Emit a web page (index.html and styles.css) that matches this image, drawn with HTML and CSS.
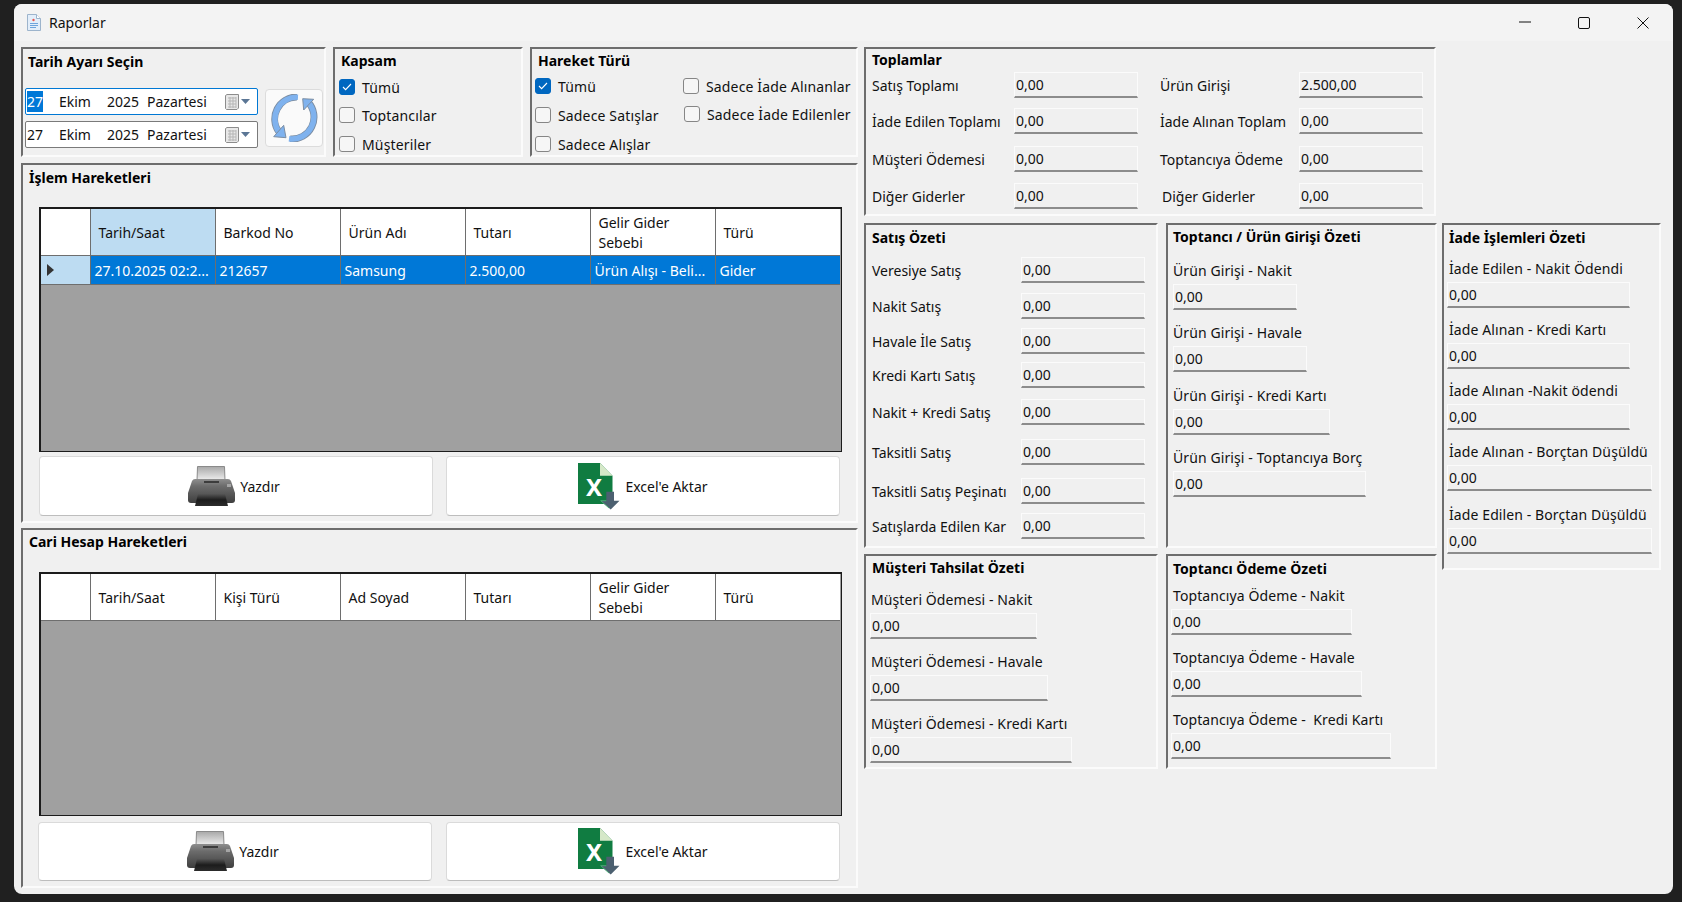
FILE: index.html
```html
<!DOCTYPE html>
<html lang="en">
<head>
    <meta charset="UTF-8">
    <meta name="viewport" content="width=device-width, initial-scale=1.0">
    <title>Raporlar</title>
    <link rel="stylesheet" href="styles.css">
</head>
<body>
<div class="window">
    <!-- Title bar -->
    <header class="titlebar">
        <svg class="doc-icon" width="14" height="17" viewBox="0 0 14 17">
            <path d="M0.5 0.5H9.5L13.5 4.5V16.5H0.5Z" fill="#e3eefa" stroke="#9db4cc"/>
            <path d="M9.5 0.5V4.5H13.5" fill="#fff" stroke="#9db4cc"/>
            <circle cx="6.5" cy="6" r="1.2" fill="#e8584f"/>
            <path d="M3 9.5H11M3 11.5H11M3 13.5H9" stroke="#6ea4dc"/>
        </svg>
        <span class="window-title">Raporlar</span>
        <div class="window-controls">
            <svg width="12" height="12" viewBox="0 0 12 12"><path d="M0 6H12" stroke="#111" stroke-width="1"/></svg>
            <svg width="12" height="12" viewBox="0 0 12 12"><rect x="0.5" y="0.5" width="11" height="11" rx="1.5" fill="none" stroke="#111"/></svg>
            <svg width="12" height="12" viewBox="0 0 12 12"><path d="M0.5 0.5L11.5 11.5M11.5 0.5L0.5 11.5" stroke="#111"/></svg>
        </div>
    </header>

    <main class="content">
        <!-- Left column -->
        <section class="left-col">
            <div class="filters">
                <div class="group tarih">
                    <h3 class="group-title low">Tarih Ayarı Seçin</h3>
                    <div class="tarih-body">
                        <div class="pickers">
                            <div class="picker focused">
                                <span class="p-day"><span class="selected">27</span></span><span class="p-month">Ekim</span><span class="p-year">2025</span><span>Pazartesi</span>
                                <svg class="cal" width="25" height="16" viewBox="0 0 25 16">
                                    <path d="M0.5 1.5L2 0.5H13.5V14L12 15.5H1.5L0.5 14.5Z" fill="#e8e8e8" stroke="#8c8c8c"/>
                                    <path d="M3 4H11M3 7H11M3 10H11M3 13H11M5 3V14M8 3V14M11 3V14" stroke="#b5b5b5"/>
                                    <path d="M16 5H25L20.5 10Z" fill="#5b7695"/>
                                </svg>
                            </div>
                            <div class="picker">
                                <span class="p-day">27</span><span class="p-month">Ekim</span><span class="p-year">2025</span><span>Pazartesi</span>
                                <svg class="cal" width="25" height="16" viewBox="0 0 25 16">
                                    <path d="M0.5 1.5L2 0.5H13.5V14L12 15.5H1.5L0.5 14.5Z" fill="#e8e8e8" stroke="#8c8c8c"/>
                                    <path d="M3 4H11M3 7H11M3 10H11M3 13H11M5 3V14M8 3V14M11 3V14" stroke="#b5b5b5"/>
                                    <path d="M16 5H25L20.5 10Z" fill="#5b7695"/>
                                </svg>
                            </div>
                        </div>
                        <button class="refresh">
                            <svg width="48" height="48" viewBox="0 0 48 48">
                                <path d="M27 3A22 22 0 0 0 9 38" fill="none" stroke="#7c8ea3" stroke-width="7"/>
                                <path d="M28 3.2A22 22 0 0 0 9 38" fill="none" stroke="#7fb2ee" stroke-width="5.4"/>
                                <path d="M3.7 42.7L16 43.7L13.7 31.3Z" fill="#7fb2ee" stroke="#7c8ea3"/>
                                <path d="M20 45A22 22 0 0 0 38 8" fill="none" stroke="#7c8ea3" stroke-width="7"/>
                                <path d="M19 44.8A22 22 0 0 0 38 8" fill="none" stroke="#7fb2ee" stroke-width="5.4"/>
                                <path d="M32.7 4.7L43.7 5.3L33.7 16Z" fill="#7fb2ee" stroke="#7c8ea3"/>
                            </svg>
                        </button>
                    </div>
                </div>

                <div class="group kapsam">
                    <h3 class="group-title">Kapsam</h3>
                    <div class="check-list">
                        <div class="check-row"><span class="box checked"><svg width="10" height="8" viewBox="0 0 10 8"><path d="M1 4L3.6 6.6L9 1" fill="none" stroke="#fff" stroke-width="1.1"/></svg></span>Tümü</div>
                        <div class="check-row"><span class="box"></span>Toptancılar</div>
                        <div class="check-row"><span class="box"></span>Müşteriler</div>
                    </div>
                </div>

                <div class="group hareket">
                    <h3 class="group-title">Hareket Türü</h3>
                    <div class="hareket-body">
                        <div class="hareket-col">
                            <div class="check-row"><span class="box checked"><svg width="10" height="8" viewBox="0 0 10 8"><path d="M1 4L3.6 6.6L9 1" fill="none" stroke="#fff" stroke-width="1.1"/></svg></span>Tümü</div>
                            <div class="check-row"><span class="box"></span>Sadece Satışlar</div>
                            <div class="check-row"><span class="box"></span>Sadece Alışlar</div>
                        </div>
                        <div class="hareket-col second">
                            <div class="check-row"><span class="box"></span>Sadece İade Alınanlar</div>
                            <div class="check-row"><span class="box"></span>Sadece İade Edilenler</div>
                        </div>
                    </div>
                </div>
            </div>

            <!-- Islem hareketleri -->
            <div class="group panel islem">
                <h3 class="group-title low">İşlem Hareketleri</h3>
                <div class="data-grid">
                    <table>
                        <thead>
                            <tr>
                                <th class="row-head"></th>
                                <th class="active">Tarih/Saat</th>
                                <th>Barkod No</th>
                                <th>Ürün Adı</th>
                                <th>Tutarı</th>
                                <th>Gelir Gider<br>Sebebi</th>
                                <th>Türü</th>
                            </tr>
                        </thead>
                        <tbody>
                            <tr>
                                <td class="row-head current"><span class="row-arrow"></span></td>
                                <td>27.10.2025 02:2...</td>
                                <td>212657</td>
                                <td>Samsung</td>
                                <td>2.500,00</td>
                                <td>Ürün Alışı - Beli...</td>
                                <td>Gider</td>
                            </tr>
                        </tbody>
                    </table>
                </div>
                <div class="btn-row">
                    <button class="btn btn-print">
                        <svg width="47" height="41" viewBox="0 0 47 41">
                            <defs>
                                <linearGradient id="paper" x1="0" y1="0" x2="0" y2="1"><stop offset="0" stop-color="#a8a8a8"/><stop offset="1" stop-color="#f2f2f2"/></linearGradient>
                                <linearGradient id="body" x1="0" y1="0" x2="0" y2="1"><stop offset="0" stop-color="#8e8e8e"/><stop offset="0.3" stop-color="#6c6c6c"/><stop offset="1" stop-color="#3e3e3e"/></linearGradient>
                                <linearGradient id="slot" x1="0" y1="0" x2="0" y2="1"><stop offset="0" stop-color="#555"/><stop offset="0.5" stop-color="#1c1c1c"/><stop offset="1" stop-color="#2c2c2c"/></linearGradient>
                            </defs>
                            <path d="M9.5 0.5H36.5L37 15H9Z" fill="url(#paper)" stroke="#8a8a8a"/>
                            <path d="M7 13H40Q42 13 43 15L47 27V34Q47 37 44 37H3Q0 37 0 34V27L4 15Q5 13 7 13Z" fill="url(#body)"/>
                            <path d="M16 15H31V17H16Z" fill="#3c3c3c"/>
                            <path d="M39 18H43V21H39Z" fill="#a5a5a5"/>
                            <path d="M10 28H37L40 40H7Z" fill="url(#slot)"/>
                        </svg>
                        <span>Yazdır</span>
                    </button>
                    <button class="btn">
                        <svg width="42" height="47" viewBox="0 0 42 47">
                            <path d="M0 0H22L34.5 12.7V41H0Z" fill="#107c41"/>
                            <path d="M22 0L34.5 12.7H22Z" fill="#d5e8c8"/>
                            <text x="16" y="33" class="excel-x">X</text>
                            <path d="M28.3 28.7V37.7H22.7L32.7 46.5L41.5 37.7H36V28.7Z" fill="#4c6070"/>
                            <path d="M28.3 37.7H22.7L31 45" fill="none" stroke="#4aa873"/>
                        </svg>
                        <span>Excel'e Aktar</span>
                    </button>
                </div>
            </div>

            <!-- Cari hesap hareketleri -->
            <div class="group panel cari">
                <h3 class="group-title">Cari Hesap Hareketleri</h3>
                <div class="data-grid">
                    <table>
                        <thead>
                            <tr>
                                <th class="row-head"></th>
                                <th>Tarih/Saat</th>
                                <th>Kişi Türü</th>
                                <th>Ad Soyad</th>
                                <th>Tutarı</th>
                                <th>Gelir Gider<br>Sebebi</th>
                                <th>Türü</th>
                            </tr>
                        </thead>
                    </table>
                </div>
                <div class="btn-row">
                    <button class="btn btn-print">
                        <svg width="47" height="41" viewBox="0 0 47 41">
                            <path d="M9.5 0.5H36.5L37 15H9Z" fill="url(#paper)" stroke="#8a8a8a"/>
                            <path d="M7 13H40Q42 13 43 15L47 27V34Q47 37 44 37H3Q0 37 0 34V27L4 15Q5 13 7 13Z" fill="url(#body)"/>
                            <path d="M16 15H31V17H16Z" fill="#3c3c3c"/>
                            <path d="M39 18H43V21H39Z" fill="#a5a5a5"/>
                            <path d="M10 28H37L40 40H7Z" fill="url(#slot)"/>
                        </svg>
                        <span>Yazdır</span>
                    </button>
                    <button class="btn">
                        <svg width="42" height="47" viewBox="0 0 42 47">
                            <path d="M0 0H22L34.5 12.7V41H0Z" fill="#107c41"/>
                            <path d="M22 0L34.5 12.7H22Z" fill="#d5e8c8"/>
                            <text x="16" y="33" class="excel-x">X</text>
                            <path d="M28.3 28.7V37.7H22.7L32.7 46.5L41.5 37.7H36V28.7Z" fill="#4c6070"/>
                            <path d="M28.3 37.7H22.7L31 45" fill="none" stroke="#4aa873"/>
                        </svg>
                        <span>Excel'e Aktar</span>
                    </button>
                </div>
            </div>
        </section>

        <!-- Right column -->
        <section class="right-col">
            <div class="group toplamlar">
                <h3 class="group-title high">Toplamlar</h3>
                <div class="totals-grid">
                    <span class="lbl">Satış Toplamı</span><div class="val">0,00</div>
                    <span class="lbl">Ürün Girişi</span><div class="val">2.500,00</div>
                    <span class="lbl">İade Edilen Toplamı</span><div class="val">0,00</div>
                    <span class="lbl">İade Alınan Toplam</span><div class="val">0,00</div>
                    <span class="lbl">Müşteri Ödemesi</span><div class="val">0,00</div>
                    <span class="lbl">Toptancıya Ödeme</span><div class="val">0,00</div>
                    <span class="lbl">Diğer Giderler</span><div class="val">0,00</div>
                    <span class="lbl shift">Diğer Giderler</span><div class="val">0,00</div>
                </div>
            </div>

            <div class="summaries">
                <div class="summary-col a">
                    <div class="group satis">
                        <h3 class="group-title low">Satış Özeti</h3>
                        <div class="satis-grid">
                            <span class="lbl">Veresiye Satış</span><div class="val">0,00</div>
                            <span class="lbl">Nakit Satış</span><div class="val">0,00</div>
                            <span class="lbl">Havale İle Satış</span><div class="val">0,00</div>
                            <span class="lbl">Kredi Kartı Satış</span><div class="val">0,00</div>
                            <span class="lbl">Nakit + Kredi Satış</span><div class="val">0,00</div>
                            <span class="lbl">Taksitli Satış</span><div class="val">0,00</div>
                            <span class="lbl">Taksitli Satış Peşinatı</span><div class="val">0,00</div>
                            <span class="lbl">Satışlarda Edilen Kar</span><div class="val">0,00</div>
                        </div>
                    </div>
                    <div class="group musteri">
                        <h3 class="group-title">Müşteri Tahsilat Özeti</h3>
                        <div class="stack">
                            <div class="field"><label>Müşteri Ödemesi - Nakit</label><div class="val w-167">0,00</div></div>
                            <div class="field"><label>Müşteri Ödemesi - Havale</label><div class="val w-178">0,00</div></div>
                            <div class="field"><label>Müşteri Ödemesi - Kredi Kartı</label><div class="val w-202">0,00</div></div>
                        </div>
                    </div>
                </div>

                <div class="summary-col b">
                    <div class="group toptanci">
                        <h3 class="group-title">Toptancı / Ürün Girişi Özeti</h3>
                        <div class="stack">
                            <div class="field"><label>Ürün Girişi - Nakit</label><div class="val w-124">0,00</div></div>
                            <div class="field"><label>Ürün Girişi - Havale</label><div class="val w-134">0,00</div></div>
                            <div class="field"><label>Ürün Girişi - Kredi Kartı</label><div class="val w-157">0,00</div></div>
                            <div class="field"><label>Ürün Girişi - Toptancıya Borç</label><div class="val w-193">0,00</div></div>
                        </div>
                    </div>
                    <div class="group odeme">
                        <h3 class="group-title low">Toptancı Ödeme Özeti</h3>
                        <div class="stack">
                            <div class="field"><label>Toptancıya Ödeme - Nakit</label><div class="val w-181">0,00</div></div>
                            <div class="field"><label>Toptancıya Ödeme - Havale</label><div class="val w-191">0,00</div></div>
                            <div class="field"><label>Toptancıya Ödeme -&nbsp; Kredi Kartı</label><div class="val w-220">0,00</div></div>
                        </div>
                    </div>
                </div>

                <div class="summary-col c">
                    <div class="group iade">
                        <h3 class="group-title low">İade İşlemleri Özeti</h3>
                        <div class="stack">
                            <div class="field"><label>İade Edilen - Nakit Ödendi</label><div class="val w-183">0,00</div></div>
                            <div class="field"><label>İade Alınan - Kredi Kartı</label><div class="val w-183">0,00</div></div>
                            <div class="field"><label>İade Alınan -Nakit ödendi</label><div class="val w-183">0,00</div></div>
                            <div class="field"><label>İade Alınan - Borçtan Düşüldü</label><div class="val w-205">0,00</div></div>
                            <div class="field"><label>İade Edilen - Borçtan Düşüldü</label><div class="val w-205">0,00</div></div>
                        </div>
                    </div>
                </div>
            </div>
        </section>
    </main>
</div>
</body>
</html>
```

FILE: styles.css
```css
/* General Reset */
* {
    margin: 0;
    padding: 0;
    box-sizing: border-box;
    font-family: 'Noto Sans', sans-serif;
}

body {
    background-color: #202020;
    height: 902px;
    padding: 4px 0 0 14px;
    overflow: hidden;
    font-size: 14px;
    color: #111;
}

.window {
    width: 1659px;
    height: 890px;
    background: #f0f0f0;
    border-radius: 8px;
    overflow: hidden;
}

/* Title bar */
.titlebar {
    height: 37px;
    background: #f3f3f3;
    display: flex;
    align-items: center;
    padding-left: 13px;
}

.window-title {
    margin-left: 8px;
    font-size: 14px;
}

.window-controls {
    margin-left: auto;
    display: flex;
    gap: 47px;
    padding-right: 24px;
}

.window-controls svg:first-child {
    margin-top: -1px;
}

/* Main layout */
.content {
    display: flex;
    gap: 6px;
    padding: 6px 0 0 7px;
}

.left-col {
    width: 837px;
    display: flex;
    flex-direction: column;
}

.right-col {
    flex: 1;
}

/* Group box */
.group {
    border: 2px solid;
    border-color: #6d6d6d #fbfbfb #fbfbfb #6d6d6d;
    padding-top: 2px;
}

.group-title {
    font-size: 14px;
    font-weight: 700;
    line-height: 20px;
    color: #000;
}

.group-title.low {
    margin-top: 1px;
}

.group-title.high {
    margin-top: -1px;
}

/* Filters */
.filters {
    display: flex;
    gap: 7px;
    height: 110px;
}

.tarih {
    width: 305px;
    padding-left: 2px;
}

.tarih .group-title {
    padding-left: 3px;
}

.tarih-body {
    display: flex;
    gap: 7px;
    margin-top: 16px;
}

.pickers {
    width: 233px;
    display: flex;
    flex-direction: column;
    gap: 6px;
}

.picker {
    height: 27px;
    background: #fff;
    border: 1px solid #7a7a7a;
    border-radius: 2px;
    display: flex;
    align-items: center;
    padding: 0 7px 1px 1px;
}

.picker.focused {
    border-color: #0078d4;
}

.p-day {
    width: 32px;
}

.p-month {
    width: 48px;
}

.p-year {
    width: 40px;
}

.selected {
    background: #0078d7;
    color: #fff;
    display: inline-block;
    width: 16px;
    line-height: 21px;
}

.cal {
    margin-left: auto;
    margin-top: 1px;
}

.refresh {
    width: 58px;
    height: 58px;
    margin-top: 1px;
    background: #fafafa;
    border: 1px solid #dcdcdc;
    border-radius: 4px;
    display: flex;
    align-items: center;
    justify-content: center;
}

.kapsam {
    width: 190px;
    padding-left: 4px;
}

.kapsam .group-title {
    padding-left: 2px;
}

.check-list {
    margin-top: 2px;
}

.check-list .check-row:first-child {
    margin-bottom: 0;
}

.check-row {
    display: flex;
    align-items: center;
    height: 28px;
    margin-bottom: 1px;
    white-space: nowrap;
    letter-spacing: 0.15px;
}

.box {
    width: 16px;
    height: 16px;
    margin-right: 7px;
    flex: none;
    background: #f6f6f6;
    border: 1px solid #868686;
    border-radius: 3px;
    display: flex;
    align-items: center;
    justify-content: center;
}

.box.checked {
    background: #0067c0;
    border-color: #0067c0;
}

.hareket {
    width: 328px;
    padding-left: 3px;
}

.hareket .group-title {
    padding-left: 3px;
}

.hareket-body {
    display: flex;
    margin-top: 1px;
}

.hareket-col {
    width: 148px;
}

.hareket-col.second .check-row {
    margin-bottom: 0;
}

.hareket-col.second .check-row:last-child {
    padding-left: 1px;
}

/* Panels with the data grids */
.panel {
    height: 360px;
    padding-left: 16px;
}

.panel .group-title {
    margin-left: -10px;
}

.islem {
    margin-top: 6px;
}

.cari {
    margin-top: 5px;
}

.data-grid {
    width: 803px;
    height: 245px;
    margin-top: 19px;
    background: #a0a0a0;
    border: 2px solid #1c1c1c;
    border-width: 2px 1px 1px 2px;
}

.cari .data-grid {
    height: 244px;
    margin-top: 20px;
}

.data-grid table {
    border-collapse: collapse;
    table-layout: fixed;
    width: 799px;
}

.data-grid th {
    width: 125px;
    height: 46px;
    background: #fff;
    font-weight: 400;
    text-align: left;
    padding: 2px 0 0 8px;
    line-height: 20px;
    border-right: 1px solid #6e6e6e;
    border-bottom: 1px solid #6e6e6e;
}

.data-grid th:last-child,
.data-grid td:last-child {
    border-right: none;
}

.data-grid th.row-head,
.data-grid td.row-head {
    width: 49px;
}

.data-grid th.active {
    background: #bddcf2;
}

.data-grid td {
    height: 29px;
    background: #0078d7;
    color: #fff;
    padding: 1px 0 0 4px;
    white-space: nowrap;
    overflow: hidden;
    border-right: 1px solid #6e6e6e;
    border-bottom: 1px solid #6e6e6e;
}

.data-grid td.current {
    background: #bddcf2;
    padding-left: 6px;
}

.row-arrow {
    display: block;
    width: 0;
    height: 0;
    border-left: 7px solid #333;
    border-top: 6px solid transparent;
    border-bottom: 6px solid transparent;
}

/* Buttons */
.btn-row {
    display: flex;
    gap: 13px;
    margin-top: 4px;
}

.cari .btn-row {
    gap: 14px;
    margin-top: 6px;
    margin-left: -1px;
}

.btn {
    width: 394px;
    height: 60px;
    background: #fff;
    border: 1px solid #dadada;
    border-bottom-color: #bdbdbd;
    border-radius: 4px;
    display: flex;
    align-items: center;
    justify-content: center;
    gap: 5px;
    font-size: 14px;
    color: #111;
}

.btn-print {
    padding-right: 4px;
}

.cari .btn {
    height: 59px;
}

.excel-x {
    font-size: 24px;
    font-weight: 700;
    fill: #fff;
    text-anchor: middle;
}

/* Value boxes */
.val {
    height: 26px;
    line-height: 24px;
    background: #f0f0f0;
    border: 1px solid #fbfbfb;
    border-bottom: 2px solid #8c8c8c;
    padding-left: 1px;
}

.lbl {
    line-height: 28px;
    white-space: nowrap;
}

.w-124 { width: 124px; }
.w-134 { width: 134px; }
.w-157 { width: 157px; }
.w-167 { width: 167px; }
.w-178 { width: 178px; }
.w-181 { width: 181px; }
.w-183 { width: 183px; }
.w-191 { width: 191px; }
.w-193 { width: 193px; }
.w-202 { width: 202px; }
.w-205 { width: 205px; }
.w-220 { width: 220px; }

/* Toplamlar */
.toplamlar {
    width: 572px;
    height: 169px;
    padding-left: 6px;
}

.totals-grid {
    display: grid;
    grid-template-columns: 142px 124px 161px 124px;
    grid-template-rows: 36px 38px 37px 26px;
    margin-top: 2px;
}

.totals-grid .lbl:nth-child(4n+3) {
    margin-left: 22px;
}

.totals-grid .lbl.shift {
    margin-left: 24px;
}

/* Ozet kutulari */
.summaries {
    display: flex;
    margin-top: 7px;
}

.summary-col {
    display: flex;
    flex-direction: column;
    gap: 6px;
}

.summary-col.a {
    width: 294px;
}

.summary-col.b {
    width: 271px;
    margin-left: 8px;
}

.summary-col.c {
    width: 219px;
    margin-left: 5px;
}

.satis {
    height: 325px;
    padding-left: 6px;
}

.satis-grid {
    display: grid;
    grid-template-columns: 149px 124px;
    grid-template-rows: 36px 35px 34px 37px 40px 39px 35px 26px;
    margin-top: 9px;
}

.stack {
    display: grid;
    grid-template-rows: 62px 62px 52px;
}

.field label {
    display: block;
    line-height: 26px;
    padding-left: 2px;
    white-space: nowrap;
    letter-spacing: 0.1px;
}

.musteri,
.odeme {
    height: 215px;
}

.musteri {
    padding-left: 4px;
}

.musteri .group-title {
    padding-left: 2px;
}

.musteri .field label {
    padding-left: 1px;
}

.musteri .stack {
    margin-top: 9px;
}

.toptanci {
    height: 325px;
    padding-left: 5px;
}

.toptanci .stack {
    margin-top: 11px;
    grid-template-rows: 62px 63px 62px 52px;
}

.toptanci .field label {
    padding-left: 0;
}

.odeme {
    padding-left: 3px;
}

.odeme .group-title {
    padding-left: 2px;
}

.odeme .stack {
    margin-top: 4px;
}

.iade {
    height: 347px;
    padding-left: 3px;
}

.iade .group-title {
    padding-left: 2px;
}

.iade .stack {
    margin-top: 8px;
    grid-template-rows: 61px 61px 61px 63px 52px;
}
```
